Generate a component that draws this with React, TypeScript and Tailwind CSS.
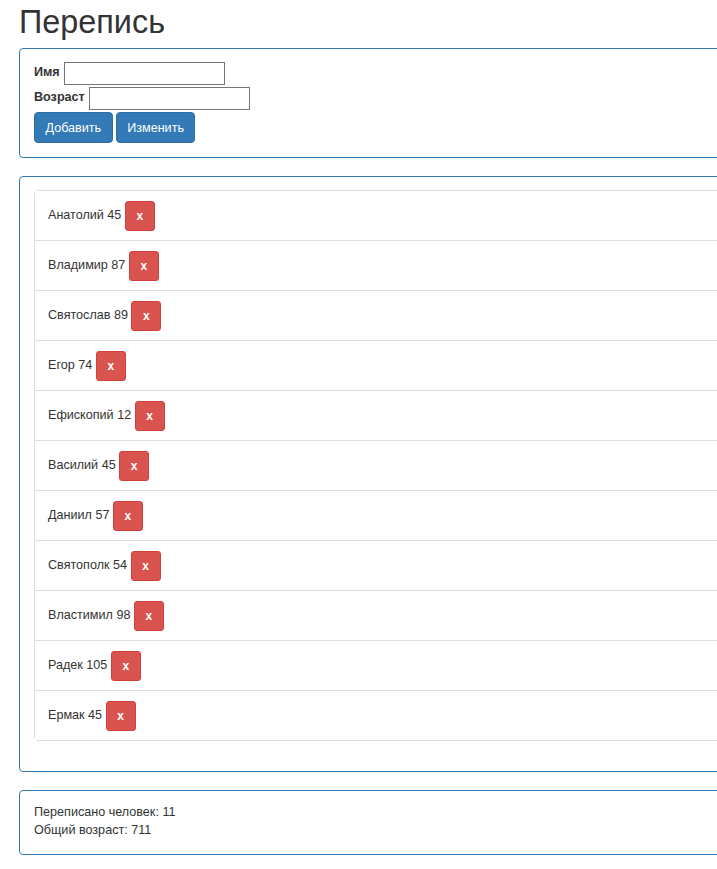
const people = [
  { name: "Анатолий", age: 45 },
  { name: "Владимир", age: 87 },
  { name: "Святослав", age: 89 },
  { name: "Егор", age: 74 },
  { name: "Ефископий", age: 12 },
  { name: "Василий", age: 45 },
  { name: "Даниил", age: 57 },
  { name: "Святополк", age: 54 },
  { name: "Властимил", age: 98 },
  { name: "Радек", age: 105 },
  { name: "Ермак", age: 45 },
];

export default function App() {
  const total = people.reduce((sum, p) => sum + p.age, 0);

  return (
    <div className="w-[717px] min-h-[869px] overflow-hidden bg-white text-[#333] text-[12.6px] leading-[18px] [font-family:'Liberation_Sans',Arial,sans-serif]">
      <div className="w-[1140px] pl-[19px]">
        <h1 className="text-[32.4px] leading-[36px] font-normal mt-[4px] mb-[8px] text-[#333]">Перепись</h1>

        {/* form */}
        <div className="border border-[#337ab7] rounded-[4px] px-[14px] pt-[13px] pb-[14px] mb-[18px]">
          <div className="h-[25px] flex items-start">
            <label className="font-bold mr-[4px] leading-[21px]">Имя</label>
            <input className="w-[161px] h-[23px] border border-[#767676] outline-none px-1" />
          </div>
          <div className="h-[25px] flex items-start">
            <label className="font-bold mr-[4px] leading-[21px]">Возраст</label>
            <input className="w-[161px] h-[23px] border border-[#767676] outline-none px-1" />
          </div>
          <div className="flex gap-[3px]">
            <button className="h-[31px] px-[10.5px] bg-[#337ab7] border border-[#2e6da4] rounded-[4px] text-white">Добавить</button>
            <button className="h-[31px] px-[10.5px] bg-[#337ab7] border border-[#2e6da4] rounded-[4px] text-white">Изменить</button>
          </div>
        </div>

        {/* list */}
        <div className="border border-[#337ab7] rounded-[4px] px-[14px] pt-[13px] pb-[30px] mb-[18px]">
          <ul className="border border-[#ddd] rounded-[4px]">
            {people.map((p, i) => (
              <li
                key={i}
                className="flex items-center h-[50px] px-[13px] border-b border-[#ddd] last:border-b-0 last:h-[49px] bg-white"
              >
                <span className="-mt-[1px]">
                  {p.name} {p.age}
                </span>
                <button className="ml-[3.5px] w-[30px] h-[30px] bg-[#d9534f] border border-[#d43f3a] rounded-[3px] text-white text-[12px] font-bold">
                  x
                </button>
              </li>
            ))}
          </ul>
        </div>

        {/* stats */}
        <div className="border border-[#337ab7] rounded-[4px] px-[14px] pt-[12px] pb-[15px]">
          <div>Переписано человек: {people.length}</div>
          <div>Общий возраст: {total}</div>
        </div>
      </div>
    </div>
  );
}
